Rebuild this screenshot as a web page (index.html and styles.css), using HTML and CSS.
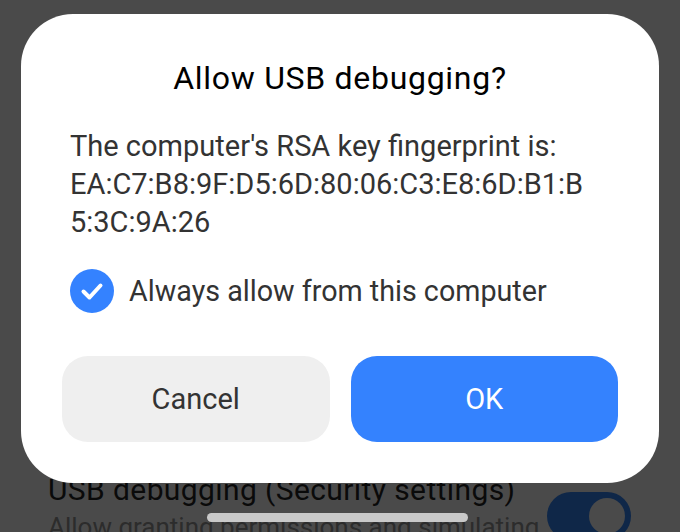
FILE: index.html
```html
<!DOCTYPE html>
<html>
<head>
<meta charset="utf-8">
<link rel="stylesheet" href="styles.css">
</head>
<body>
<div class="screen">
  <div class="bg-item">
    <div class="bg-text">
      <div class="bg-title">USB debugging (Security settings)</div>
      <div class="bg-sub">Allow granting permissions and simulating</div>
    </div>
    <div class="toggle"><span class="knob"></span></div>
  </div>
  <div class="home-bar"></div>
  <div class="dialog">
    <div class="title">Allow USB debugging?</div>
    <div class="message">The computer's RSA key fingerprint is:<br>EA:C7:B8:9F:D5:6D:80:06:C3:E8:6D:B1:B<br>5:3C:9A:26</div>
    <div class="check-row">
      <span class="check">
        <svg width="44" height="44" viewBox="0 0 44 44"><circle cx="22" cy="22" r="22" fill="#3482ff"/><path d="M13.5 22.5 L19.5 28.5 L30.5 16.5" fill="none" stroke="#fff" stroke-width="4" stroke-linecap="round" stroke-linejoin="round"/></svg>
      </span>
      <span class="check-label">Always allow from this computer</span>
    </div>
    <div class="buttons">
      <div class="btn btn-cancel">Cancel</div>
      <div class="btn btn-ok">OK</div>
    </div>
  </div>
</div>
</body>
</html>
```
FILE: styles.css
```css
html, body {
  margin: 0;
  padding: 0;
}
body {
  width: 680px;
  height: 532px;
  overflow: hidden;
  background: #4a4a4a;
  font-family: Roboto, "Noto Sans", sans-serif;
}
.screen {
  position: relative;
  width: 680px;
  height: 532px;
  overflow: hidden;
}
.bg-item {
  display: flex;
  align-items: flex-start;
  justify-content: space-between;
  padding: 470px 48px 0 48px;
}
.bg-title {
  font-size: 30px;
  line-height: 40px;
  letter-spacing: 0.4px;
  color: #0a0a0a;
}
.bg-sub {
  font-size: 26px;
  line-height: 34px;
  color: #2c2c2c;
}
.toggle {
  margin-top: 22px;
  margin-right: 1px;
  width: 84px;
  height: 48px;
  border-radius: 24px;
  background: #0f2748;
  display: flex;
  align-items: center;
  justify-content: flex-end;
  padding: 0 6px;
  box-sizing: border-box;
}
.knob {
  width: 36px;
  height: 36px;
  border-radius: 50%;
  background: #4a4a4a;
}
.home-bar {
  position: absolute;
  left: 207px;
  top: 513px;
  width: 261px;
  height: 9px;
  border-radius: 5px;
  background: #c9c9c9;
}
.dialog {
  position: absolute;
  left: 21px;
  top: 14px;
  width: 638px;
  height: 469px;
  box-sizing: border-box;
  background: #fff;
  border-radius: 52px;
  padding: 44px 41px 0 41px;
  display: flex;
  flex-direction: column;
}
.title {
  text-align: center;
  font-size: 32px;
  line-height: 40px;
  letter-spacing: 0.7px;
  font-weight: 400;
  color: #000;
}
.message {
  margin-top: 29px;
  padding: 0 8px;
  font-size: 29px;
  line-height: 38px;
  color: #333;
}
.check-row {
  margin-top: 28px;
  padding: 0 8px;
  display: flex;
  align-items: center;
  gap: 15px;
}
.check {
  display: flex;
  width: 44px;
  height: 44px;
}
.check-label {
  font-size: 28.7px;
  color: #333;
}
.buttons {
  margin-top: 43px;
  display: flex;
  gap: 21px;
}
.btn {
  flex: 1;
  height: 86px;
  border-radius: 26px;
  display: flex;
  align-items: center;
  justify-content: center;
  font-size: 29px;
}
.btn-cancel {
  background: #efefef;
  color: #333;
}
.btn-ok {
  background: #3482fe;
  color: #fff;
}
```
